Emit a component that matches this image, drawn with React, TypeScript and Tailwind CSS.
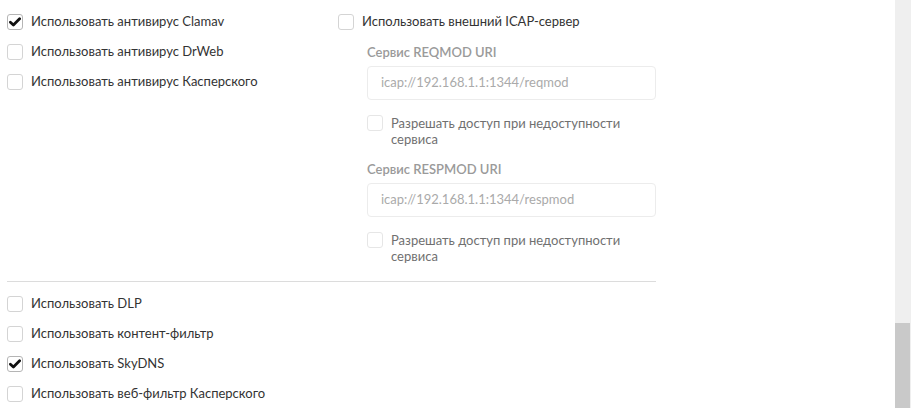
import React from 'react';

function Box({ checked = false, disabled = false }: { checked?: boolean; disabled?: boolean }) {
  return (
    <span
      className={
        'w-4 h-4 shrink-0 rounded-[3px] border bg-white flex items-center justify-center ' +
        (disabled ? 'border-[#e6e6e6]' : checked ? 'border-[#b5b5b5]' : 'border-[#d4d4d4]')
      }
    >
      {checked && (
        <svg width="12" height="10" viewBox="0 0 12 10">
          <path d="M1.4 5.2 L4.4 8 L10.6 1.8" fill="none" stroke="#111" strokeWidth="2.8" strokeLinecap="round" strokeLinejoin="round" />
        </svg>
      )}
    </span>
  );
}

function Row({ label, checked }: { label: string; checked?: boolean }) {
  return (
    <div className="h-[30px] flex items-center gap-2">
      <Box checked={checked} />
      <span className="text-[13px] text-[#333]">{label}</span>
    </div>
  );
}

function UriField({ title, value }: { title: string; value: string }) {
  return (
    <div>
      <div className="text-[13px] font-semibold text-[#9a9a9a] leading-4">{title}</div>
      <div className="mt-[6px] h-[34px] border border-[#ececec] rounded-[4px] flex items-center px-[13px] text-[13px] text-[#aaa]">
        {value}
      </div>
      <div className="mt-[15px] flex items-start gap-2">
        <Box disabled />
        <span className="text-[13px] leading-4 text-[#707070] w-[240px]">
          Разрешать доступ при недоступности сервиса
        </span>
      </div>
    </div>
  );
}

export default function App() {
  return (
    <div className="w-[920px] h-[408px] bg-white flex overflow-hidden" style={{ fontFamily: 'Lato, "Noto Sans", sans-serif' }}>
      <div className="w-[649px] ml-[7px] pt-[7px]">
        <div className="flex">
          {/* Antivirus */}
          <div className="w-[331px]">
            <Row label="Использовать антивирус Clamav" checked />
            <Row label="Использовать антивирус DrWeb" />
            <Row label="Использовать антивирус Касперского" />
          </div>

          {/* ICAP */}
          <div className="flex-1">
            <Row label="Использовать внешний ICAP-сервер" />
            <div className="pl-[29px] mt-[7px]">
              <UriField title="Сервис REQMOD URI" value="icap://192.168.1.1:1344/reqmod" />
              <div className="mt-[14px]">
                <UriField title="Сервис RESPMOD URI" value="icap://192.168.1.1:1344/respmod" />
              </div>
            </div>
          </div>
        </div>

        <div className="mt-[17px] border-t border-[#dcdcdc]" />

        <div className="pt-[7px]">
          <Row label="Использовать DLP" />
          <Row label="Использовать контент-фильтр" />
          <Row label="Использовать SkyDNS" checked />
          <Row label="Использовать веб-фильтр Касперского" />
        </div>
      </div>

      <div className="flex-1" />
      {/* Scrollbar */}
      <div className="w-[16px] mr-[9px] bg-[#efefef] flex flex-col">
        <div className="flex-1" />
        <div className="h-[85px] w-[15px] bg-[#c9c9c9]" />
      </div>
    </div>
  );
}
